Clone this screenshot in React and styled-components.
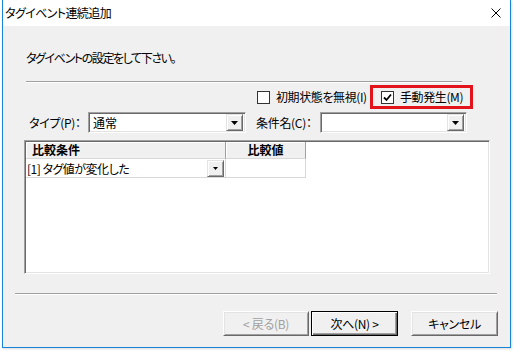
import React from 'react';
import styled, { createGlobalStyle } from 'styled-components';

const GlobalStyle = createGlobalStyle`
  html, body {
    margin: 0;
    padding: 0;
    background: #fff;
  }
  body {
    font-family: "Noto Sans CJK JP", "Noto Sans", sans-serif;
    font-size: 12px;
    color: #000;
    font-feature-settings: "palt";
  }
`;

const Screen = styled.div`
  width: 514px;
  height: 351px;
  padding-left: 2px;
  box-sizing: border-box;
`;

const Window = styled.div`
  width: 509px;
  height: 348px;
  box-sizing: border-box;
  border: 1px solid #1883d7;
  border-top: none;
  display: flex;
  flex-direction: column;
  box-shadow: 1px 1px 2px rgba(0, 0, 0, 0.15);
`;

const TitleBar = styled.div`
  height: 26px;
  flex: none;
  background: #fff;
  display: flex;
  align-items: center;
  padding: 0 9px 0 2px;
`;

const Title = styled.div`
  flex: 1;
  line-height: 16px;
  letter-spacing: -0.6px;
`;

const Body = styled.div`
  flex: 1;
  background: #f0f0f0;
  display: flex;
  flex-direction: column;
  align-items: flex-start;
`;

const Instruction = styled.div`
  margin: 24px 0 0 23px;
  line-height: 16px;
  letter-spacing: -1.4px;
`;

const Separator = styled.div`
  height: 0;
  border-top: 1px solid #a0a0a0;
  border-bottom: 1px solid #fff;
  width: ${p => p.$width}px;
  margin: ${p => p.$top}px 0 0 ${p => p.$left}px;
`;

const OptionRow = styled.div`
  display: flex;
  align-items: center;
  height: 24px;
  margin: 2px 0 0 254px;
`;

const CheckItem = styled.label`
  display: flex;
  align-items: center;
  gap: 6px;
  line-height: 16px;
  white-space: nowrap;
  letter-spacing: -0.4px;
  width: ${p => (p.$width ? `${p.$width}px` : 'auto')};
`;

const Box = styled.span`
  width: 13px;
  height: 13px;
  box-sizing: border-box;
  border: 1px solid #333;
  background: #fff;
  display: flex;
  align-items: center;
  justify-content: center;
  flex: none;
`;

const Highlight = styled.div`
  margin-left: 3px;
  width: 103px;
  height: 24px;
  box-sizing: border-box;
  border: 3px solid #e3131c;
  padding: 0 0 0 8px;
  display: flex;
  align-items: center;
`;

const FieldRow = styled.div`
  display: flex;
  align-items: center;
  height: 21px;
  margin: 3px 0 0 26px;
`;

const Label = styled.div`
  width: ${p => p.$width}px;
  margin-left: ${p => p.$gap || 0}px;
  line-height: 16px;
  white-space: nowrap;
  letter-spacing: -0.3px;
`;

const Combo = styled.div`
  width: ${p => p.$width}px;
  height: 21px;
  box-sizing: border-box;
  border-style: solid;
  border-width: 1px;
  border-color: #a0a0a0 #fff #fff #a0a0a0;
  box-shadow: inset 1px 1px #696969, inset -1px -1px #e3e3e3;
  background: #fff;
  display: flex;
  align-items: center;
  padding: 2px 2px 2px 4px;
`;

const ComboText = styled.div`
  flex: 1;
  line-height: 16px;
`;

const DropButton = styled.div`
  width: ${p => p.$size || 17}px;
  height: ${p => p.$size || 17}px;
  box-sizing: border-box;
  background: #f0f0f0;
  border-style: solid;
  border-width: 1px;
  border-color: #e3e3e3 #696969 #696969 #e3e3e3;
  box-shadow: inset 1px 1px #fff, inset -1px -1px #a0a0a0;
  display: flex;
  align-items: center;
  justify-content: center;
  flex: none;
`;

const Grid = styled.div`
  margin: 7px 0 0 21px;
  width: 466px;
  height: 134px;
  box-sizing: border-box;
  border-style: solid;
  border-width: 1px;
  border-color: #a0a0a0 #fff #fff #a0a0a0;
  box-shadow: inset 1px 1px #696969, inset -1px -1px #e3e3e3;
  background: #fff;
  padding: 1px;
`;

const GridRow = styled.div`
  display: flex;
  height: ${p => p.$height}px;
`;

const HeadCell = styled.div`
  width: ${p => p.$width}px;
  box-sizing: border-box;
  background: #f0f0f0;
  border-right: 1px solid #a0a0a0;
  border-bottom: 1px solid #d8d8d8;
  box-shadow: inset 1px 1px #fff;
  font-weight: bold;
  line-height: 16px;
  display: flex;
  align-items: center;
  justify-content: ${p => (p.$center ? 'center' : 'flex-start')};
  padding-left: ${p => (p.$center ? 0 : 6)}px;
`;

const Cell = styled.div`
  width: ${p => p.$width}px;
  box-sizing: border-box;
  border-right: 1px solid #d8d8d8;
  border-bottom: 1px solid #d8d8d8;
  display: flex;
  align-items: center;
  padding: 1px 1px 0 1px;
  line-height: 16px;
`;

const CellText = styled.div`
  flex: 1;
  white-space: nowrap;
  letter-spacing: -0.5px;
`;

const ButtonRow = styled.div`
  display: flex;
  margin: 16px 0 0 220px;
`;

const Button = styled.div`
  width: ${p => p.$width}px;
  height: 25px;
  margin-left: ${p => p.$gap || 0}px;
  box-sizing: border-box;
  background: #f0f0f0;
  border-style: solid;
  border-width: 1px;
  border-color: ${p => (p.$default ? '#000' : '#fff #696969 #696969 #fff')};
  box-shadow: ${p =>
    p.$default
      ? 'inset 1px 1px #fff, inset -1px -1px #696969, inset -2px -2px #a0a0a0'
      : 'inset 1px 1px #e3e3e3, inset -1px -1px #a0a0a0'};
  color: ${p => (p.$disabled ? '#a0a0a0' : '#000')};
  display: flex;
  align-items: center;
  justify-content: center;
  line-height: 16px;
  white-space: pre;
  letter-spacing: -0.3px;
`;

const Arrow = () => (
  <svg width="7" height="4" viewBox="0 0 7 4">
    <path d="M0 0h7L3.5 4z" fill="#000" />
  </svg>
);

const SmallArrow = () => (
  <svg width="5" height="3" viewBox="0 0 5 3">
    <path d="M0 0h5L2.5 3z" fill="#000" />
  </svg>
);

const CheckMark = () => (
  <svg width="9" height="9" viewBox="0 0 9 9">
    <path d="M1 4.5l2.5 2.5L8 1.5" stroke="#000" strokeWidth="1.8" fill="none" />
  </svg>
);

const CloseIcon = () => (
  <svg width="10" height="10" viewBox="0 0 10 10">
    <path d="M0.5 0.5l9 9M9.5 0.5l-9 9" stroke="#000" strokeWidth="1" />
  </svg>
);

export default function App() {
  return (
    <Screen>
      <GlobalStyle />
      <Window>
        <TitleBar>
          <Title>タグイベント連続追加</Title>
          <CloseIcon />
        </TitleBar>
        <Body>
          <Instruction>タグイベントの設定をして下さい。</Instruction>
          <Separator $width={436} $top={15} $left={23} />

          <OptionRow>
            <CheckItem $width={110}>
              <Box />
              初期状態を無視(I)
            </CheckItem>
            <Highlight>
              <CheckItem>
                <Box><CheckMark /></Box>
                手動発生(M)
              </CheckItem>
            </Highlight>
          </OptionRow>

          <FieldRow>
            <Label $width={59}>タイプ(P)：</Label>
            <Combo $width={158}>
              <ComboText>通常</ComboText>
              <DropButton><Arrow /></DropButton>
            </Combo>
            <Label $width={64} $gap={10}>条件名(C)：</Label>
            <Combo $width={147}>
              <ComboText />
              <DropButton><Arrow /></DropButton>
            </Combo>
          </FieldRow>

          <Grid>
            <GridRow $height={17}>
              <HeadCell $width={200}>比較条件</HeadCell>
              <HeadCell $width={80} $center>比較値</HeadCell>
            </GridRow>
            <GridRow $height={19}>
              <Cell $width={200}>
                <CellText>[1] タグ値が変化した</CellText>
                <DropButton $size={17}><SmallArrow /></DropButton>
              </Cell>
              <Cell $width={80} />
            </GridRow>
          </Grid>

          <Separator $width={482} $top={19} $left={12} />

          <ButtonRow>
            <Button $width={86} $disabled>{'< 戻る(B)'}</Button>
            <Button $width={87} $gap={2} $default>{'次へ(N) >'}</Button>
            <Button $width={87} $gap={13}>キャンセル</Button>
          </ButtonRow>
        </Body>
      </Window>
    </Screen>
  );
}
